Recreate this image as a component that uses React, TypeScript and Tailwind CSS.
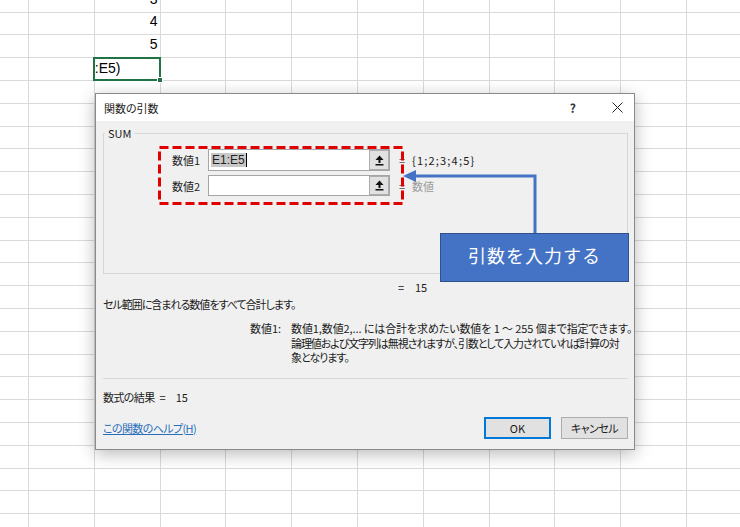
import React from "react"

const colClass = (i: number) => (i === 0 ? "w-[29px]" : "w-[65.8px]")

function RefIcon() {
  return (
    <svg width="9" height="11" viewBox="0 0 9 11">
      <polygon points="4.5,0.5 0.5,5 8.5,5" fill="#111" />
      <rect x="3.5" y="4.5" width="2" height="3.5" fill="#111" />
      <rect x="0.5" y="9" width="8" height="1.5" fill="#111" />
    </svg>
  )
}

function Cell({ r, c }: { r: number; c: number }) {
  let content: React.ReactNode = null
  if (c === 2 && r < 3) {
    content = (
      <div className="flex h-full items-end justify-end pr-[2px] pb-[6px] overflow-hidden">
        <span className="text-[14px] leading-[14px] text-black">{r + 3}</span>
      </div>
    )
  }
  if (c === 2 && r === 3) {
    return (
      <div className="relative h-full border-r border-b border-[#dadada] bg-white">
        <div className="absolute -left-[2px] -top-[1px] -right-[1px] -bottom-[1px] border-2 border-[#217346]" />
        <div className="absolute -right-[3px] -bottom-[3px] w-[6px] h-[6px] bg-[#217346] border border-white" />
        <div className="flex h-full items-end pb-[5px]">
          <span className="text-[14px] leading-[14px] text-black">:E5)</span>
        </div>
      </div>
    )
  }
  return <div className="h-full border-r border-b border-[#dadada]">{content}</div>
}

export default function App() {
  const rows = Array.from({ length: 24 }, (_, i) => i)
  const cols = Array.from({ length: 12 }, (_, i) => i)

  return (
    <div className="relative w-[740px] h-[527px] overflow-hidden bg-white font-['Liberation_Sans',sans-serif]">
      {/* sheet */}
      <div className="flex flex-col">
        {rows.map((r) => (
          <div key={r} className={r === 0 ? "flex h-[12.7px] shrink-0" : "flex h-[22.8px] shrink-0"}>
            {cols.map((c) => (
              <div key={c} className={colClass(c) + " shrink-0"}>
                <Cell r={r} c={c} />
              </div>
            ))}
          </div>
        ))}
      </div>

      {/* dialog */}
      <div className="absolute left-[95px] top-[93px] w-[540px] border border-[#8a8a8a] bg-[#f0f0f0] shadow-[0_4px_16px_rgba(0,0,0,0.28)] text-[11px] leading-[14px] text-[#1a1a1a] font-['Noto_Sans_CJK_JP',sans-serif] [font-feature-settings:'palt']">
        <div className="flex h-[27px] items-center bg-white pl-[8px]">
          <span className="text-[11px]">関数の引数</span>
          <span className="ml-auto mr-[36px] text-[12px] font-bold text-[#333]">?</span>
          <svg width="11" height="11" viewBox="0 0 11 11" className="mr-[11px]">
            <path d="M0.5 0.5 L10.5 10.5 M10.5 0.5 L0.5 10.5" stroke="#222" strokeWidth="1" />
          </svg>
        </div>

        <div className="pl-[7px] pr-[6px] pb-[10px]">
          <fieldset className="mt-[5px] h-[148px] w-[525px] border border-[#d6d6d6] pt-[9px]">
            <legend className="ml-[1px] px-[3px] leading-[14px]">SUM</legend>
            <div className="flex flex-col gap-[4px] pl-[68px]">
              <div className="flex items-center h-[22px]">
                <span className="w-[36px]">数値1</span>
                <div className="flex w-[182px] h-[22px] border border-[#a5a5a5] bg-white">
                  <div className="flex flex-1 items-center pl-[2px] font-['Liberation_Sans',sans-serif] text-[12px]">
                    <span className="bg-[#c8c8c8] text-[#222] px-[1px]">E1:E5</span>
                    <span className="w-[1px] h-[14px] bg-black" />
                  </div>
                  <div className="flex w-[20px] items-center justify-center border border-[#adadad] bg-[#e1e1e1]">
                    <RefIcon />
                  </div>
                </div>
                <span className="ml-[9px] w-[13px] text-[#555]">=</span>
                <span className="tracking-[1.2px] text-[11px]">{"{1;2;3;4;5}"}</span>
              </div>
              <div className="flex items-center h-[21px]">
                <span className="w-[36px]">数値2</span>
                <div className="flex w-[182px] h-[21px] border border-[#a5a5a5] bg-white">
                  <div className="flex-1" />
                  <div className="flex w-[20px] items-center justify-center border border-[#adadad] bg-[#e1e1e1]">
                    <RefIcon />
                  </div>
                </div>
                <span className="ml-[9px] w-[13px] text-[#555]">=</span>
                <span className="text-[#9a9a9a]">数値</span>
              </div>
            </div>
          </fieldset>

          <div className="mt-[6px] flex pl-[295px]">
            <span className="w-[17px]">=</span>
            <span>15</span>
          </div>
          <div className="mt-[3px] tracking-[-1px]">セル範囲に含まれる数値をすべて合計します。</div>

          <div className="mt-[10px] flex pl-[147px] leading-[14.5px]">
            <span className="w-[41px] shrink-0 whitespace-nowrap">数値1:</span>
            <div className="flex flex-col whitespace-nowrap">
              <span className="tracking-[-0.1px]">数値1,数値2,... には合計を求めたい数値を 1 ～ 255 個まで指定できます。</span>
              <span className="tracking-[-1.1px]">論理値および文字列は無視されますが、引数として入力されていれば計算の対</span>
              <span className="tracking-[-1px]">象となります。</span>
            </div>
          </div>

          <div className="mt-[13px] h-[1px] bg-[#d8d8d8]" />

          <div className="mt-[11px] flex">
            <span className="tracking-[-0.6px]">数式の結果</span>
            <span className="ml-[5px]">=</span>
            <span className="ml-[10px]">15</span>
          </div>

          <div className="mt-[13px] flex items-center">
            <span className="text-[#2a6ebb] underline tracking-[-0.6px]">この関数のヘルプ(H)</span>
            <div className="ml-auto flex gap-[10px]">
              <button className="w-[67px] h-[22px] bg-[#e1e1e1] border border-[#0078d7] shadow-[inset_0_0_0_1px_#0078d7] text-[11px]">
                OK
              </button>
              <button className="w-[67px] h-[22px] bg-[#e1e1e1] border border-[#adadad] text-[11px] tracking-[-0.5px]">
                キャンセル
              </button>
            </div>
          </div>
        </div>
      </div>

      {/* annotations */}
      <svg className="absolute left-[157px] top-[145px]" width="248" height="61" viewBox="0 0 248 61">
        <rect x="2.5" y="2.5" width="243" height="56" fill="none" stroke="#e00000" strokeWidth="3" strokeDasharray="9 4" />
      </svg>
      <svg className="absolute left-[400px] top-[166px]" width="142" height="70" viewBox="0 0 142 70">
        <path d="M135 68 V10 H14" fill="none" stroke="#4472c4" strokeWidth="3" />
        <polygon points="3,10 16,4 16,16" fill="#4472c4" />
      </svg>
      <div className="absolute left-[440px] top-[233px] flex w-[189px] h-[49px] items-center justify-center border border-[#2f528f] bg-[#4472c4] pb-[5px]">
        <span className="text-white text-[18px] tracking-[1px] font-['Noto_Sans_CJK_JP',sans-serif]">引数を入力する</span>
      </div>
    </div>
  )
}
